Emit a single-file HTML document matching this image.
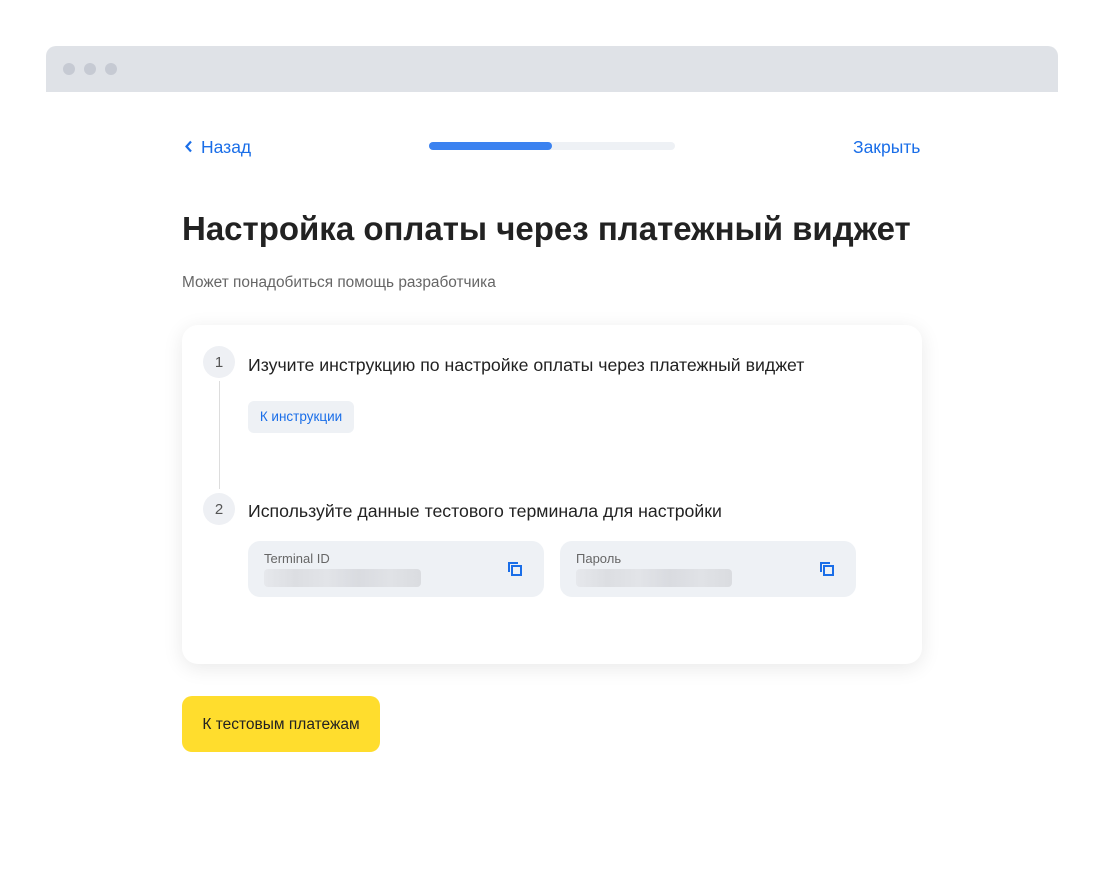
<!DOCTYPE html>
<html><head><meta charset="utf-8"><style>
body{margin:0;width:1104px;height:874px;background:#fff;font-family:"Liberation Sans",sans-serif;position:relative;overflow:hidden}
.a{position:absolute}
.bar{left:46px;top:46px;width:1012px;height:46px;background:#dfe2e7;border-radius:10px 10px 0 0}
.dot{width:12px;height:12px;border-radius:50%;background:#c6cad3;top:17px}
.blue{color:#1a6ee8}
.card{left:182px;top:325px;width:740px;height:339px;background:#fff;border-radius:16px;box-shadow:0 4px 20px rgba(0,0,0,.09)}
.num{width:32px;height:32px;border-radius:50%;background:#eef0f4;color:#555;font-size:15px;text-align:center;line-height:34px}
.field{width:296px;height:56px;background:#eef1f5;border-radius:12px}
.blur{height:18px;background:linear-gradient(90deg,#e6e8ec,#dcdee2 20%,#e2e4e8 40%,#d9dbe0 60%,#e0e2e6 80%,#dadce0);border-radius:4px}
</style></head><body>
<div class="a bar"><div class="a dot" style="left:17px"></div><div class="a dot" style="left:38px"></div><div class="a dot" style="left:59px"></div></div>
<svg class="a" style="left:184px;top:140px" width="10" height="13" viewBox="0 0 10 13"><path d="M7 1.5L2.5 6.5 7 11.5" fill="none" stroke="#1a6ee8" stroke-width="2.2"/></svg>
<div class="a blue" style="left:201px;top:137px;font-size:17.5px">Назад</div>
<div class="a" style="left:429px;top:142px;width:246px;height:8px;background:#eef1f5;border-radius:4px"><div style="width:123px;height:8px;background:#3b82f0;border-radius:4px"></div></div>
<div class="a blue" style="left:853px;top:137px;font-size:17.5px">Закрыть</div>
<div class="a" style="left:182px;top:210px;font-size:33px;font-weight:bold;color:#222">Настройка оплаты через платежный виджет</div>
<div class="a" style="left:182px;top:274px;font-size:15.4px;color:#666">Может понадобиться помощь разработчика</div>
<div class="a card">
<div class="a num" style="left:21px;top:21px">1</div>
<div class="a" style="left:37px;top:56px;width:1px;height:108px;background:#ddd"></div>
<div class="a" style="left:66px;top:30px;font-size:17.7px;color:#222">Изучите инструкцию по настройке оплаты через платежный виджет</div>
<div class="a blue" style="left:66px;top:76px;width:106px;height:32px;background:#eef1f5;border-radius:6px;font-size:13.5px;line-height:32px;text-align:center">К инструкции</div>
<div class="a num" style="left:21px;top:168px">2</div>
<div class="a" style="left:66px;top:176px;font-size:17.7px;color:#222">Используйте данные тестового терминала для настройки</div>
<div class="a field" style="left:66px;top:216px"><div class="a" style="left:16px;top:10px;font-size:13px;color:#666">Terminal ID</div><div class="a blur" style="left:16px;top:28px;width:157px"></div>
<svg class="a" style="left:259px;top:20px" width="16" height="16" viewBox="0 0 16 16"><path d="M2 11V2h9" fill="none" stroke="#1a6ee8" stroke-width="2"/><rect x="5" y="5" width="9" height="9" fill="none" stroke="#1a6ee8" stroke-width="2"/></svg></div>
<div class="a field" style="left:378px;top:216px"><div class="a" style="left:16px;top:10px;font-size:13px;color:#666">Пароль</div><div class="a blur" style="left:16px;top:28px;width:156px"></div>
<svg class="a" style="left:259px;top:20px" width="16" height="16" viewBox="0 0 16 16"><path d="M2 11V2h9" fill="none" stroke="#1a6ee8" stroke-width="2"/><rect x="5" y="5" width="9" height="9" fill="none" stroke="#1a6ee8" stroke-width="2"/></svg></div>
</div>
<div class="a" style="left:182px;top:696px;width:198px;height:56px;background:#ffdd2d;border-radius:10px;font-size:15.5px;color:#222;line-height:58px;text-align:center">К тестовым платежам</div>
</body></html>
